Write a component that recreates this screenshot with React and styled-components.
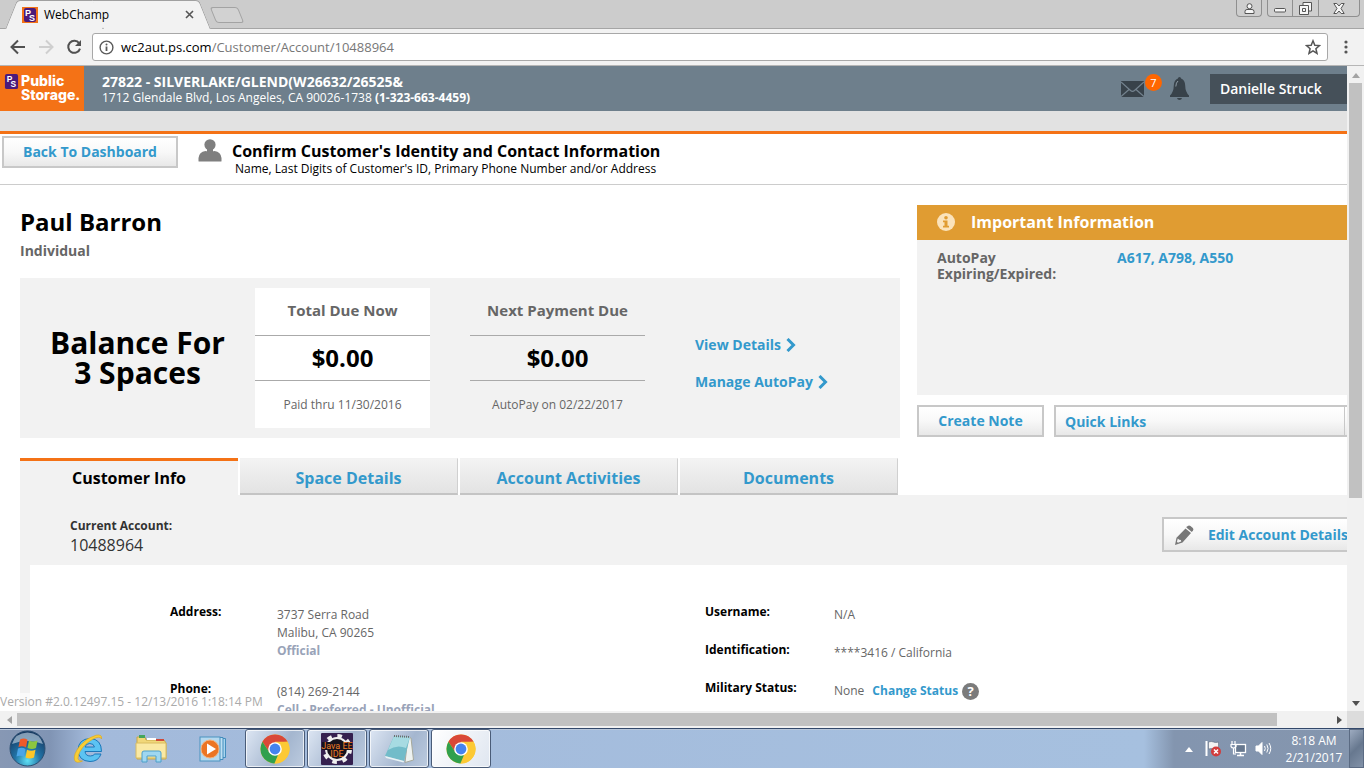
import React from "react";
import styled, { createGlobalStyle, css } from "styled-components";

const GlobalStyle = createGlobalStyle`
  * { box-sizing: border-box; }
  html, body { margin: 0; padding: 0; }
  body {
    font-family: "Open Sans", "Noto Sans", sans-serif;
    font-size: 12px;
    color: #000;
    background: #fff;
    overflow: hidden;
  }
  button, select { font-family: inherit; margin: 0; cursor: pointer; }
  h1, h2, p, dl, dt, dd { margin: 0; }
  a { text-decoration: none; }
  svg { display: block; flex: none; }
`;

const blue = "#3399cc";
const orange = "#f47216";

/* ---------- Browser frame ---------- */

const Screen = styled.div`
  display: flex;
  flex-direction: column;
  height: 100vh;
`;

const TabStrip = styled.div`
  display: flex;
  flex: none;
  height: 29px;
  padding-left: 11px;
  background: #cccccc;
  border-bottom: 1px solid #a5a5a5;
`;

const BrowserTab = styled.div`
  position: relative;
  display: flex;
  align-items: center;
  width: 194px;
  height: 29px;
  padding: 0 11px;
  font-size: 12px;
  &::before, &::after {
    content: "";
    position: absolute;
    top: 0;
    bottom: 0;
    background: #f2f2f2;
    border-top: 1px solid #a0a0a0;
  }
  &::before {
    left: 0;
    right: 50%;
    border-left: 1px solid #a0a0a0;
    border-top-left-radius: 4px;
    transform: skewX(-22deg);
  }
  &::after {
    left: 45%;
    right: 0;
    border-right: 1px solid #a0a0a0;
    border-top-right-radius: 4px;
    transform: skewX(22deg);
  }
  > * { position: relative; z-index: 1; }
`;

const TabTitle = styled.span`
  flex: 1;
  margin-left: 6px;
`;

const PlainButton = styled.button`
  display: flex;
  align-items: center;
  justify-content: center;
  padding: 0;
  border: 0;
  background: none;
`;

const NewTab = styled.button`
  width: 28px;
  height: 16px;
  margin: 7px 0 0 8px;
  border: 1px solid #a3a3a3;
  border-radius: 3px;
  background: #d2d2d2;
  transform: skewX(22deg);
`;

const WindowControls = styled.div`
  display: flex;
  margin-left: auto;
  padding-right: 4px;
`;

const WindowButton = styled.button`
  display: flex;
  align-items: center;
  justify-content: center;
  width: ${(p) => p.$width || 26}px;
  height: 17px;
  margin-left: ${(p) => (p.$joined ? -1 : 5)}px;
  padding: 0;
  background: #cecece;
  border: 1px solid #8f8f8f;
  border-top: 0;
  border-radius: ${(p) => p.$corners || "0"};
`;

const Toolbar = styled.div`
  display: flex;
  flex: none;
  align-items: center;
  height: 37px;
  padding: 0 4px;
  background: #f2f2f2;
  border-bottom: 1px solid #b6b6b6;
`;

const NavButton = styled(PlainButton)`
  width: 28px;
  height: 28px;
`;

const AddressBar = styled.div`
  display: flex;
  flex: 1;
  align-items: center;
  height: 28px;
  margin: 0 4px;
  padding: 0 6px;
  background: #fff;
  border: 1px solid #a8a8a8;
  border-radius: 3px;
`;

const Url = styled.span`
  flex: 1;
  margin-left: 7px;
  font-size: 13px;
  color: #777;
  b { font-weight: 400; color: #000; }
`;

const Frame = styled.div`
  display: grid;
  grid-template-columns: minmax(0, 1fr) 17px;
  grid-template-rows: minmax(0, 1fr) 17px;
  flex: 1;
  min-height: 0;
`;

const Viewport = styled.div`
  position: relative;
  min-width: 0;
  overflow: hidden;
  background: #fff;
`;

const ScrollBar = styled.div`
  display: flex;
  flex-direction: ${(p) => (p.$vertical ? "column" : "row")};
  background: #f1f1f1;
`;

const ScrollArrow = styled(PlainButton)`
  flex: none;
  width: 17px;
  height: 17px;
`;

const ScrollTrack = styled.div`
  display: flex;
  flex: 1;
  padding: ${(p) => (p.$vertical ? "0 2px" : "2px 0")};
`;

const ScrollThumb = styled.div`
  background: #c1c1c1;
  width: ${(p) => (p.$vertical ? "100%" : "96%")};
  height: ${(p) => (p.$vertical ? "68%" : "100%")};
`;

const ScrollCorner = styled.div`
  background: #dcdcdc;
`;

/* ---------- Page ---------- */

const Page = styled.div`
  width: 104%;
`;

const SiteHeader = styled.header`
  display: flex;
  align-items: center;
  height: 45px;
  background: #6e7f8c;
  color: #fff;
`;

const Logo = styled.a`
  display: flex;
  align-items: flex-start;
  width: 84px;
  height: 45px;
  padding: 8px 0 0 4px;
  background: ${orange};
  color: #fff;
`;

const LogoText = styled.span`
  margin-left: 2px;
  font-family: Inter, "Liberation Sans", sans-serif;
  font-size: 14px;
  font-weight: 800;
  line-height: 14px;
`;

const Facility = styled.div`
  flex: 1;
  margin-left: 18px;
  padding-top: 2px;
  font-size: 12px;
  line-height: 16px;
`;

const FacilityName = styled.div`
  font-size: 14px;
  font-weight: 700;
`;

const MailButton = styled(PlainButton)`
  position: relative;
  margin-right: 26px;
`;

const Count = styled.span`
  position: absolute;
  left: 24px;
  top: -7px;
  width: 17px;
  height: 17px;
  border-radius: 50%;
  background: #ff6600;
  color: #fff;
  font-size: 11px;
  line-height: 17px;
  text-align: center;
`;

const UserMenu = styled.button`
  width: 191px;
  height: 30px;
  margin-left: 21px;
  padding: 0 10px;
  border: 0;
  background: #455059;
  color: #fff;
  font-size: 14px;
  font-weight: 600;
  text-align: left;
`;

const SubBand = styled.div`
  height: 23px;
  background: #e2e2e2;
  border-bottom: 3px solid ${orange};
`;

const ConfirmBar = styled.div`
  display: flex;
  align-items: flex-start;
  height: 51px;
  padding: 2px;
  border-bottom: 1px solid #cccccc;
`;

const boxed = css`
  border: 2px solid #c8c8c8;
  background: linear-gradient(#ffffff, #f8f8f8 50%, #e8e8e8);
  color: ${blue};
  font-weight: 700;
`;

const ActionButton = styled.button`
  ${boxed}
  display: flex;
  align-items: center;
  justify-content: ${(p) => (p.$icon ? "flex-start" : "center")};
  gap: 14px;
  width: ${(p) => p.$width}px;
  height: ${(p) => (p.$icon ? 35 : 32)}px;
  padding: 0 ${(p) => (p.$icon ? 10 : 0)}px;
  font-size: 14px;
  line-height: 18px;
  white-space: nowrap;
`;

const ConfirmIcon = styled.div`
  margin: 3px 10px 0 20px;
`;

const ConfirmTitle = styled.h1`
  padding-top: 4px;
  font-size: 16px;
  font-weight: 700;
  line-height: 22px;
`;

const ConfirmHint = styled.p`
  padding-left: 3px;
  font-size: 12px;
  line-height: 14px;
`;

const Overview = styled.section`
  display: flex;
  gap: 17px;
  padding: 20px;
`;

const Summary = styled.div`
  width: 880px;
`;

const CustomerName = styled.h2`
  font-size: 24px;
  font-weight: 700;
  line-height: 34px;
`;

const CustomerType = styled.p`
  padding-bottom: 15px;
  font-size: 14px;
  font-weight: 700;
  line-height: 24px;
  color: #666;
`;

const BalancePanel = styled.div`
  display: flex;
  align-items: stretch;
  height: 160px;
  padding: 10px 0;
  background: #f2f2f2;
`;

const BalanceTitle = styled.div`
  display: flex;
  align-items: center;
  justify-content: center;
  width: 235px;
  font-size: 30px;
  font-weight: 700;
  line-height: 30px;
  text-align: center;
`;

const AmountCard = styled.div`
  display: flex;
  flex-direction: column;
  width: 175px;
  margin-right: 40px;
  background: ${(p) => (p.$raised ? "#fff" : "none")};
  text-align: center;
`;

const AmountLabel = styled.div`
  flex: none;
  height: 47px;
  font-size: 15px;
  font-weight: 700;
  line-height: 45px;
  color: #666;
`;

const Amount = styled.div`
  border: solid #aaa;
  border-width: 1px 0;
  font-size: 24px;
  font-weight: 700;
  line-height: 44px;
`;

const AmountNote = styled.div`
  font-size: 12px;
  line-height: 47px;
  color: #666;
`;

const BalanceLinks = styled.nav`
  display: flex;
  flex-direction: column;
  gap: 17px;
  padding: 47px 0 0 10px;
`;

const TextLink = styled.a`
  display: inline-flex;
  align-items: center;
  gap: 5px;
  color: ${blue};
  font-size: ${(p) => p.$size || 14}px;
  font-weight: 700;
  line-height: 20px;
`;

const Side = styled.aside`
  flex: 1;
  min-width: 0;
`;

const AlertHeader = styled.div`
  display: flex;
  align-items: center;
  gap: 16px;
  height: 35px;
  padding: 0 0 1px 20px;
  background: #e09c32;
  color: #fff;
  font-size: 16px;
  font-weight: 700;
`;

const AlertBody = styled.dl`
  display: flex;
  height: 155px;
  padding: 10px 20px;
  background: #f2f2f2;
  font-size: 14px;
  font-weight: 700;
  line-height: 16px;
  color: #666;
  dt { width: 180px; }
  a { line-height: 16px; }
`;

const SideActions = styled.div`
  display: flex;
  gap: 10px;
  margin-top: 10px;
`;

const QuickLinks = styled.div`
  ${boxed}
  display: flex;
  flex: 1;
  height: 32px;
`;

const QuickSelect = styled.select`
  flex: 1;
  appearance: none;
  padding: 0 9px;
  border: 0;
  border-right: 1px solid #c8c8c8;
  background: none;
  color: inherit;
  font-size: 14px;
  font-weight: 700;
`;

const SelectArrow = styled.span`
  display: flex;
  align-items: center;
  justify-content: center;
  width: 34px;
`;

const Tabs = styled.div`
  display: flex;
  gap: 2px;
  padding-left: 20px;
`;

const Tab = styled.button`
  width: 218px;
  height: 37px;
  padding: 0;
  border: 0;
  font-size: 16px;
  font-weight: 700;
  ${(p) =>
    p.$active
      ? css`
          border-top: 3px solid ${orange};
          background: #f2f2f2;
          color: #000;
        `
      : css`
          padding-top: 4px;
          border-right: 1px solid #d0d0d0;
          border-top: 1px solid #f2f2f2;
          border-bottom: 2px solid #c4c4c4;
          background: linear-gradient(#f3f3f3, #e3e3e3);
          color: ${blue};
        `}
`;

const TabPanel = styled.section`
  margin-left: 20px;
  padding: 0 10px 10px;
  background: #f2f2f2;
`;

const AccountBar = styled.div`
  display: flex;
  justify-content: space-between;
  height: 70px;
  padding: 22px 30px 0 40px;
  color: #333;
`;

const AccountLabel = styled.div`
  font-weight: 700;
  line-height: 17px;
`;

const AccountNumber = styled.div`
  font-size: 16px;
  line-height: 22px;
`;

const Details = styled.div`
  display: flex;
  min-height: 300px;
  padding: 38px 20px 40px 140px;
  background: #fff;
`;

const DetailColumn = styled.dl`
  display: flex;
  flex-direction: column;
  gap: ${(p) => p.$gap}px;
  width: 535px;
`;

const DetailRow = styled.div`
  display: flex;
  line-height: 18px;
  dt {
    width: ${(p) => p.$label}px;
    font-weight: 700;
  }
  dd {
    padding-top: 3px;
    color: #666;
  }
`;

const Tag = styled.div`
  color: #99a3b8;
  font-weight: 700;
`;

const StatusLine = styled.div`
  display: flex;
  align-items: center;
  gap: 8px;
  height: 18px;
`;

const HelpButton = styled.button`
  width: 17px;
  height: 17px;
  margin-left: -4px;
  padding: 0;
  border: 0;
  border-radius: 50%;
  background: #7b7b7b;
  color: #fff;
  font-size: 13px;
  font-weight: 700;
  line-height: 17px;
`;

const Version = styled.div`
  position: absolute;
  left: 0;
  bottom: 0;
  padding-right: 8px;
  background: rgba(255, 255, 255, 0.6);
  color: #aaa;
  font-size: 12px;
  line-height: 18px;
`;

/* ---------- Taskbar ---------- */

const Taskbar = styled.footer`
  display: flex;
  flex: none;
  height: 40px;
  border-top: 1px solid #33486a;
  background: linear-gradient(
    to right,
    #8798b4 0, #8094b4 50px, #a3badb 90px, #a6c0df calc(100% - 220px),
    #8395af calc(100% - 190px), #8596ae 100%
  );
  box-shadow: inset 0 1px 0 #b9c8dc;
`;

const StartButton = styled(PlainButton)`
  width: 54px;
  margin-right: 4px;
`;

const TaskSlot = styled.button`
  display: flex;
  align-items: center;
  justify-content: center;
  width: 60px;
  height: 39px;
  margin: 0 1px;
  padding: 0;
  border: 1px solid transparent;
  border-radius: 3px;
  background: none;
  ${(p) =>
    p.$open &&
    css`
      border-color: #4a5c78;
      background: ${p.$front
        ? "linear-gradient(120deg, #ffffff, #dfe6f0)"
        : "linear-gradient(120deg, #dde6f3, #a4b6cf 60%, #bccbdf)"};
      box-shadow: inset 0 0 0 1px rgba(255, 255, 255, 0.7);
    `}
`;

const Tray = styled.div`
  display: flex;
  align-items: center;
  gap: 8px;
  margin-left: auto;
  color: #fff;
`;

const TrayButton = styled(PlainButton)`
  margin-right: 4px;
`;

const Clock = styled.div`
  display: flex;
  flex-direction: column;
  align-items: center;
  width: 54px;
  margin-left: 7px;
  font-size: 12px;
  line-height: 17px;
  white-space: nowrap;
`;

const ShowDesktop = styled.button`
  width: 15px;
  height: 39px;
  padding: 0;
  border: 1px solid #5b6b83;
  background: linear-gradient(135deg, #9dabc0 0, #67788f 50%, #8292a8);
`;

/* ---------- Icons ---------- */

const PsMark = ({ size = 16, framed }) => (
  <svg width={size} height={size} viewBox="0 0 16 16">
    {framed && <rect width="16" height="16" fill="#f47216" />}
    <rect x={framed ? 2 : 1} y={framed ? 1 : 0} width={framed ? 12 : 14} height={framed ? 14 : 16} rx="2" fill="#4b1a7a" />
    <text x="3" y="9" fontSize="9" fontWeight="700" fill="#fff" fontFamily="Liberation Sans">P</text>
    <text x="7" y="14" fontSize="9" fontWeight="700" fill="#fff" fontFamily="Liberation Sans">S</text>
  </svg>
);

const Arrow = ({ dir, color = "#505050" }) => {
  const d = { up: "M4 0 8 5H0z", down: "M0 0h8L4 5z", left: "M5 0v8L0 4z", right: "M0 0l5 4-5 4z" }[dir];
  return (
    <svg width="8" height="8" viewBox={dir === "up" || dir === "down" ? "0 -2 8 8" : "-2 0 8 8"}>
      <path d={d} fill={color} />
    </svg>
  );
};

const BackIcon = ({ color, flip }) => (
  <svg width="16" height="16" viewBox="0 0 16 16" fill="none" stroke={color} strokeWidth="2">
    <path d={flip ? "M1 8h13M8 1.5 14.5 8 8 14.5" : "M15 8H2M8 1.5 1.5 8 8 14.5"} />
  </svg>
);

const Reload = () => (
  <svg width="16" height="16" viewBox="0 0 16 16">
    <path d="M13.2 4.4A6 6 0 1 0 14 9.6" fill="none" stroke="#505050" strokeWidth="2" />
    <path d="M15 1v6H9z" fill="#505050" />
  </svg>
);

const PageInfo = () => (
  <svg width="15" height="15" viewBox="0 0 15 15">
    <circle cx="7.5" cy="7.5" r="6.4" fill="none" stroke="#5a5a5a" strokeWidth="1.4" />
    <path d="M7.5 6.5V11" stroke="#5a5a5a" strokeWidth="1.8" />
    <circle cx="7.5" cy="4.4" r="1" fill="#5a5a5a" />
  </svg>
);

const Star = () => (
  <svg width="16" height="16" viewBox="0 0 16 16">
    <path d="M8 1.8 9.8 6.2l4.7.4-3.6 3.1 1.1 4.6L8 11.8l-4 2.5 1.1-4.6L1.5 6.6l4.7-.4z" fill="none" stroke="#555" strokeWidth="1.5" />
  </svg>
);

const Dots = () => (
  <svg width="4" height="14" viewBox="0 0 4 14" fill="#555">
    <circle cx="2" cy="2" r="1.6" /><circle cx="2" cy="7" r="1.6" /><circle cx="2" cy="12" r="1.6" />
  </svg>
);

const Mail = () => (
  <svg width="23" height="16" viewBox="0 0 23 16">
    <rect width="23" height="16" fill="#38424a" />
    <path d="M0 1l9.5 8.5q2 1.6 4 0L23 1M0 15.5 8 8.5M23 15.5 15 8.5" fill="none" stroke="#74838f" strokeWidth="1.3" />
  </svg>
);

const Bell = () => (
  <svg width="19" height="23" viewBox="0 0 19 23" fill="#38424a">
    <path d="M9.500 0q1.500 0 1.600 1.500Q15 3 15.200 8.500 15.300 15 19 18.500V20H0V18.500Q3.700 15 3.800 8.500 4 3 7.900 1.500 8 0 9.500 0z" />
    <path d="M7 21h5q-.5 2-2.500 2T7 21z" />
    <path d="M8 4Q6 5.500 5.800 9.500" fill="none" stroke="#8f9ca6" />
  </svg>
);

const Person = () => (
  <svg width="24" height="23" viewBox="0 0 24 23" fill="#7f7f7f">
    <circle cx="12" cy="5.800" r="5.600" />
    <path d="M.5 22v-3Q1 13 7.500 12q4.500 1 9 0 6.500 1 7 7v3q0 .5-.5.5H1q-.5 0-.5-.5z" />
    <path d="M9 10h6v4H9z" />
  </svg>
);

const InfoBadge = () => (
  <svg width="18" height="18" viewBox="0 0 18 18">
    <circle cx="9" cy="9" r="9" fill="#fbe3bb" />
    <circle cx="9" cy="4.800" r="1.800" fill="#e09c32" />
    <path d="M6 7.500h4.500v5.200H12v1.800H6v-1.800h1.500V9.300H6z" fill="#e09c32" />
  </svg>
);

const Chevron = () => (
  <svg width="10" height="14" viewBox="0 0 10 14">
    <path d="M1.500 1l6 6-6 6" fill="none" stroke={blue} strokeWidth="3" />
  </svg>
);

const Pencil = () => (
  <svg width="20" height="20" viewBox="0 0 20 20" fill="#777">
    <path d="M13.500 1.200Q15 0 16.500 1L18.800 3Q20 4.300 19 5.600L17.800 7 12.300 2.500z" />
    <path d="M11.500 3.500L17 8 8.500 17.500 1 20 2.500 12.800zM3.800 13.500l-.9 3.300 1 .9 3.300-1.200-.3-1.600-1.600-.1z" fillRule="evenodd" />
  </svg>
);

const StartOrb = () => (
  <svg width="37" height="37" viewBox="0 0 37 37">
    <defs>
      <radialGradient id="orb" cx="50%" cy="85%" r="80%">
        <stop offset="0" stopColor="#5fe0f4" /><stop offset="0.45" stopColor="#2173a6" /><stop offset="1" stopColor="#173a63" />
      </radialGradient>
    </defs>
    <circle cx="18.500" cy="18.500" r="17.500" fill="url(#orb)" stroke="#2c4f72" />
    <path d="M3 14Q6 3 18.500 2.500 31 3 34 14 18 8 3 14z" fill="#cbdcea" opacity="0.6" />
    <path d="M11 9.500q4-2 7.500.3L17 17.500q-3.500-2.300-7.500-.5z" fill="#ee5a2a" />
    <path d="M20 10.500q4 2 8.500 0L27 18q-4 2-8.500 0z" fill="#8cc63f" />
    <path d="M9 18.500q4-1.800 7.500.5L15 27q-3.500-2.300-7.500-.5z" fill="#4aa5e8" />
    <path d="M18 19.700q4 2 8.500 0L25 27.500q-4 2-8.500 0z" fill="#fbc629" />
  </svg>
);

const ExplorerE = () => (
  <svg width="32" height="32" viewBox="0 0 32 32">
    <path d="M28.500 18.500H12q.5 4.500 5.300 4.500 3 0 4.500-2H28Q25.500 28.500 17 28.500 5.500 28 5 17 5.500 6 17 5.500q11.500.5 11.500 13zM12 14h9.500q-.8-3.500-4.700-3.500T12 14z" fill="#5cc3f2" stroke="#1c77b9" />
    <path d="M28.500 6Q29.500 1 23 2.200 14 4.500 7 12.500 0 21.500 1.500 27q1.500 4 8 1-4 .5-4.500-2.500Q5 19 12.500 11.500 20.500 4.500 25.500 4.200q2.500 0 3 1.800z" fill="#f8cd35" stroke="#dba416" strokeWidth="0.600" />
  </svg>
);

const Folder = () => (
  <svg width="32" height="30" viewBox="0 0 32 30">
    <path d="M2 3h8l1 3h18l2 3v16H2z" fill="#f1d779" stroke="#c9a848" />
    <rect x="4" y="1" width="6" height="3" fill="#45a55c" /><rect x="12" y="4" width="9" height="2" fill="#fff" /><rect x="21" y="5" width="8" height="2" fill="#cf4b3a" />
    <path d="M1 9h30v15H1z" fill="#fae9a4" stroke="#d8bc63" />
    <path d="M7 28V19q0-2 2-2h15q2 0 2 2v9h-5v-6h-9v6z" fill="#9fd7f0" stroke="#4d9fca" />
  </svg>
);

const MediaPlayer = () => (
  <svg width="28" height="28" viewBox="0 0 28 28">
    <path d="M20 3.500h6.500v19H20z" fill="#a9d5ee" stroke="#438dbd" />
    <path d="M19 2.500h5v22h-5z" fill="#bfe0f3" stroke="#438dbd" />
    <rect x="1" y="2" width="20" height="24" fill="#b5d9ef" stroke="#4b93c0" />
    <circle cx="11" cy="14" r="9" fill="#ec7524" stroke="#f5b27c" />
    <path d="M8 8.500l9 5.500-9 5.500z" fill="#fff" />
  </svg>
);

const Chrome = () => (
  <svg width="30" height="30" viewBox="0 0 30 30">
    <circle cx="15" cy="15" r="14.500" fill="#fcc934" />
    <path d="M2.440 7.750A14.500 14.500 0 0 1 27.560 7.750L15 8.500 9.400 18.200z" fill="#d94838" />
    <path d="M27.560 7.750H15L20.600 18.250 14.400 29.500A14.500 14.500 0 0 0 27.560 7.750z" fill="#fcc934" />
    <path d="M2.440 7.750L9.400 18.250Q12 21.500 18 21L14.400 29.500A14.500 14.500 0 0 1 2.440 7.750z" fill="#30a04d" />
    <circle cx="15" cy="15" r="6.800" fill="#fff" />
    <circle cx="15" cy="15" r="5.400" fill="#4583ee" />
  </svg>
);

const JavaIde = () => (
  <svg width="32" height="32" viewBox="0 0 32 32">
    <rect width="32" height="32" rx="1" fill="#35204f" />
    <circle cx="16" cy="16" r="13" fill="none" stroke="#efefef" strokeWidth="4" strokeDasharray="4.500 5.710" />
    <circle cx="16" cy="16" r="11" fill="#17121d" stroke="#efefef" strokeWidth="2" />
    <rect x="1" y="9" width="30" height="8" fill="#17121d" />
    <text x="16" y="16" textAnchor="middle" fontSize="9" fill="#ee7d25" fontFamily="Roboto">Java EE</text>
    <text x="16" y="24" textAnchor="middle" fontSize="9" fill="#ee7d25" fontFamily="Roboto">IDE</text>
  </svg>
);

const Notepad = () => (
  <svg width="32" height="30" viewBox="0 0 32 30">
    <path d="M25 3l3 1 2.500 22L22 28.500z" fill="#eef2f0" stroke="#a7a99c" />
    <path d="M11 2l16 1-6 24-19-5z" fill="#72bcc9" />
    <path d="M11 2l16 1-4 11Q14 10 5 16z" fill="#a7dbe2" />
    <path d="M2 22l19 5-.5 1.500L3 24z" fill="#e8f3f5" />
    <path d="M11 2l16 1" stroke="#6c6c6c" strokeWidth="2" strokeDasharray="1 1" />
  </svg>
);

const Flag = () => (
  <svg width="17" height="17" viewBox="0 0 17 17">
    <path d="M1.500 1v15" stroke="#fff" strokeWidth="2" />
    <path d="M3.500 2q3-1 5 0t5 0v7q-3 1-5 0t-5 0z" fill="#f3f3f3" stroke="#4c5a6f" strokeWidth="0.500" />
    <circle cx="11" cy="11.500" r="5" fill="#d23c3c" />
    <path d="M9 9.500l4 4M13 9.500l-4 4" stroke="#fff" strokeWidth="1.500" />
  </svg>
);

const Network = () => (
  <svg width="17" height="16" viewBox="0 0 17 16" fill="none" stroke="#fff">
    <rect x="5.500" y="3.500" width="10" height="8" fill="#67788f" strokeWidth="1.300" />
    <path d="M7 14.500h7M10.500 12v2" strokeWidth="1.500" />
    <path d="M2 0v3M5 0v3M1 3.500h5v2q-.5 1.500-2.500 1.500T1 5.500zM3.500 7v6H6" strokeWidth="1.200" />
  </svg>
);

const Speaker = () => (
  <svg width="17" height="15" viewBox="0 0 17 15" fill="none" stroke="#fff">
    <path d="M1 5h2.500L7 1.500v12L3.500 10H1z" fill="#fff" />
    <path d="M9.500 5q1.500 2.500 0 5M11.800 3.500q2.500 4 0 8M14 2q3.500 5.500 0 11" />
  </svg>
);

const outline = { fill: "#f6f6f6", stroke: "#555" };

export default function App() {
  return (
    <Screen>
      <GlobalStyle />
      <TabStrip>
        <BrowserTab>
          <PsMark framed />
          <TabTitle>WebChamp</TabTitle>
          <PlainButton aria-label="Close tab">
            <svg width="9" height="9" viewBox="0 0 9 9">
              <path d="M1 1l7 7M8 1L1 8" stroke="#555" strokeWidth="1.600" />
            </svg>
          </PlainButton>
        </BrowserTab>
        <NewTab aria-label="New tab" />
        <WindowControls>
          <WindowButton aria-label="Profile" $corners="0 0 4px 4px">
            <svg width="11" height="11" viewBox="0 0 11 11" {...outline}>
              <circle cx="5.500" cy="3.200" r="2.500" />
              <path d="M1 10.500V8.500q0-2 2-2h5q2 0 2 2v2z" />
            </svg>
          </WindowButton>
          <WindowButton aria-label="Minimize" $corners="0 0 0 4px">
            <svg width="12" height="9" viewBox="0 0 12 9" {...outline}>
              <rect x="0.500" y="4.500" width="11" height="3.500" rx="1" />
            </svg>
          </WindowButton>
          <WindowButton aria-label="Restore" $joined $width={27}>
            <svg width="13" height="13" viewBox="0 0 13 13" {...outline}>
              <path d="M4 .5h8.500v8.500H4z" />
              <path d="M.5 3.500H9.500v9H.5z" />
              <path d="M3.500 6.500h3v3h-3z" />
            </svg>
          </WindowButton>
          <WindowButton aria-label="Close" $joined $width={42} $corners="0 0 4px 0">
            <svg width="12" height="11" viewBox="0 0 12 11" {...outline}>
              <path d="M.8.5h3L6 3l2.200-2.500h3L8 5.500l3.200 5h-3L6 8l-2.200 2.500h-3L4 5.500z" />
            </svg>
          </WindowButton>
        </WindowControls>
      </TabStrip>

      <Toolbar>
        <NavButton aria-label="Back"><BackIcon color="#505050" /></NavButton>
        <NavButton aria-label="Forward"><BackIcon color="#cfcfcf" flip /></NavButton>
        <NavButton aria-label="Reload"><Reload /></NavButton>
        <AddressBar>
          <PageInfo />
          <Url><b>wc2aut.ps.com</b>/Customer/Account/10488964</Url>
          <PlainButton aria-label="Bookmark"><Star /></PlainButton>
        </AddressBar>
        <NavButton aria-label="Menu"><Dots /></NavButton>
      </Toolbar>

      <Frame>
        <Viewport>
          <Page>
            <SiteHeader>
              <Logo href="#home">
                <PsMark size={15} />
                <LogoText>Public<br />Storage.</LogoText>
              </Logo>
              <Facility>
                <FacilityName>27822 - SILVERLAKE/GLEND(W26632/26525&amp;</FacilityName>
                <div>1712 Glendale Blvd, Los Angeles, CA 90026-1738 <b>(1-323-663-4459)</b></div>
              </Facility>
              <MailButton aria-label="Messages"><Mail /><Count>7</Count></MailButton>
              <PlainButton aria-label="Notifications"><Bell /></PlainButton>
              <UserMenu>Danielle Struck</UserMenu>
            </SiteHeader>
            <SubBand />
            <ConfirmBar>
              <ActionButton $width={176}>Back To Dashboard</ActionButton>
              <ConfirmIcon><Person /></ConfirmIcon>
              <div>
                <ConfirmTitle>Confirm Customer's Identity and Contact Information</ConfirmTitle>
                <ConfirmHint>Name, Last Digits of Customer's ID, Primary Phone Number and/or Address</ConfirmHint>
              </div>
            </ConfirmBar>

            <Overview>
              <Summary>
                <CustomerName>Paul Barron</CustomerName>
                <CustomerType>Individual</CustomerType>
                <BalancePanel>
                  <BalanceTitle>Balance For<br />3 Spaces</BalanceTitle>
                  <AmountCard $raised>
                    <AmountLabel>Total Due Now</AmountLabel>
                    <Amount>$0.00</Amount>
                    <AmountNote>Paid thru 11/30/2016</AmountNote>
                  </AmountCard>
                  <AmountCard>
                    <AmountLabel>Next Payment Due</AmountLabel>
                    <Amount>$0.00</Amount>
                    <AmountNote>AutoPay on 02/22/2017</AmountNote>
                  </AmountCard>
                  <BalanceLinks>
                    <TextLink href="#details">View Details <Chevron /></TextLink>
                    <TextLink href="#autopay">Manage AutoPay <Chevron /></TextLink>
                  </BalanceLinks>
                </BalancePanel>
              </Summary>
              <Side>
                <AlertHeader><InfoBadge />Important Information</AlertHeader>
                <AlertBody>
                  <dt>AutoPay<br />Expiring/Expired:</dt>
                  <dd><TextLink href="#spaces">A617, A798, A550</TextLink></dd>
                </AlertBody>
                <SideActions>
                  <ActionButton $width={127}>Create Note</ActionButton>
                  <QuickLinks>
                    <QuickSelect aria-label="Quick Links"><option>Quick Links</option></QuickSelect>
                    <SelectArrow><Arrow dir="down" color={blue} /></SelectArrow>
                  </QuickLinks>
                </SideActions>
              </Side>
            </Overview>

            <Tabs role="tablist">
              <Tab role="tab" aria-selected="true" $active>Customer Info</Tab>
              <Tab role="tab">Space Details</Tab>
              <Tab role="tab">Account Activities</Tab>
              <Tab role="tab">Documents</Tab>
            </Tabs>
            <TabPanel>
              <AccountBar>
                <div>
                  <AccountLabel>Current Account:</AccountLabel>
                  <AccountNumber>10488964</AccountNumber>
                </div>
                <ActionButton $icon $width={199}><Pencil />Edit Account Details</ActionButton>
              </AccountBar>
              <Details>
                <DetailColumn $gap={20}>
                  <DetailRow $label={107}>
                    <dt>Address:</dt>
                    <dd>3737 Serra Road<br />Malibu, CA 90265<Tag>Official</Tag></dd>
                  </DetailRow>
                  <DetailRow $label={107}>
                    <dt>Phone:</dt>
                    <dd>(814) 269-2144<Tag>Cell - Preferred - Unofficial</Tag></dd>
                  </DetailRow>
                </DetailColumn>
                <DetailColumn $gap={17}>
                  <DetailRow $label={129}>
                    <dt>Username:</dt>
                    <dd>N/A</dd>
                  </DetailRow>
                  <DetailRow $label={129}>
                    <dt>Identification:</dt>
                    <dd>****3416 / California</dd>
                  </DetailRow>
                  <DetailRow $label={129}>
                    <dt>Military Status:</dt>
                    <dd>
                      <StatusLine>
                        None <TextLink href="#status" $size={12}>Change Status</TextLink>
                        <HelpButton aria-label="Help">?</HelpButton>
                      </StatusLine>
                    </dd>
                  </DetailRow>
                </DetailColumn>
              </Details>
            </TabPanel>
          </Page>
          <Version>Version #2.0.12497.15 - 12/13/2016 1:18:14 PM</Version>
        </Viewport>
        <ScrollBar $vertical>
          <ScrollArrow aria-label="Scroll up"><Arrow dir="up" color="#a3a3a3" /></ScrollArrow>
          <ScrollTrack $vertical><ScrollThumb $vertical /></ScrollTrack>
          <ScrollArrow aria-label="Scroll down"><Arrow dir="down" /></ScrollArrow>
        </ScrollBar>
        <ScrollBar>
          <ScrollArrow aria-label="Scroll left"><Arrow dir="left" color="#a3a3a3" /></ScrollArrow>
          <ScrollTrack><ScrollThumb /></ScrollTrack>
          <ScrollArrow aria-label="Scroll right"><Arrow dir="right" /></ScrollArrow>
        </ScrollBar>
        <ScrollCorner />
      </Frame>

      <Taskbar>
        <StartButton aria-label="Start"><StartOrb /></StartButton>
        <TaskSlot aria-label="Internet Explorer"><ExplorerE /></TaskSlot>
        <TaskSlot aria-label="File Explorer"><Folder /></TaskSlot>
        <TaskSlot aria-label="Media Player"><MediaPlayer /></TaskSlot>
        <TaskSlot $open aria-label="Chrome"><Chrome /></TaskSlot>
        <TaskSlot $open aria-label="Java EE IDE"><JavaIde /></TaskSlot>
        <TaskSlot $open aria-label="Notepad"><Notepad /></TaskSlot>
        <TaskSlot $open $front aria-label="Chrome window"><Chrome /></TaskSlot>
        <Tray>
          <TrayButton aria-label="Show hidden icons"><Arrow dir="up" color="#fff" /></TrayButton>
          <Flag />
          <Network />
          <Speaker />
          <Clock><span>8:18 AM</span><span>2/21/2017</span></Clock>
          <ShowDesktop aria-label="Show desktop" />
        </Tray>
      </Taskbar>
    </Screen>
  );
}
